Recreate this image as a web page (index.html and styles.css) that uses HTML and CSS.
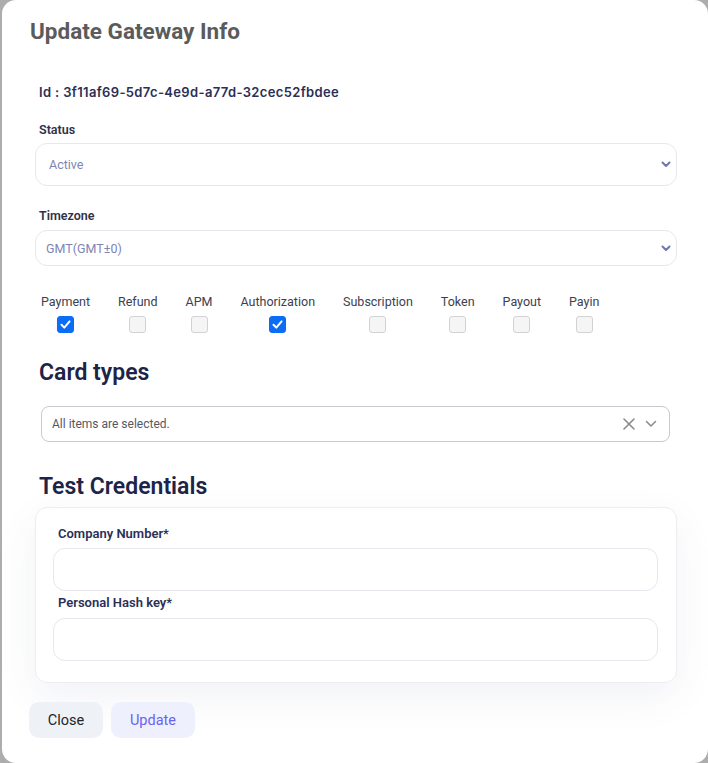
FILE: index.html
```html
<!DOCTYPE html>
<html lang="en">
<head>
<meta charset="utf-8">
<title>Update Gateway Info</title>
<link rel="stylesheet" href="styles.css">
</head>
<body>
<div class="modal">
  <h1 class="title">Update Gateway Info</h1>
  <div class="content">
    <div class="id-line">Id : 3f11af69-5d7c-4e9d-a77d-32cec52fbdee</div>

    <label class="field-label status-label">Status</label>
    <div class="select select-lg">
      <span class="select-value">Active</span>
      <svg class="chev" width="10" height="7" viewBox="0 0 10 7"><path d="M1.5 1.5 L5 5 L8.5 1.5" fill="none" stroke="#6e77ad" stroke-width="2" stroke-linecap="round" stroke-linejoin="round"/></svg>
    </div>

    <label class="field-label tz-label">Timezone</label>
    <div class="select select-sm">
      <span class="select-value tz">GMT(GMT±0)</span>
      <svg class="chev" width="10" height="7" viewBox="0 0 10 7"><path d="M1.5 1.5 L5 5 L8.5 1.5" fill="none" stroke="#6e77ad" stroke-width="2" stroke-linecap="round" stroke-linejoin="round"/></svg>
    </div>

    <div class="checks">
      <div class="check"><span class="check-label">Payment</span><span class="box checked"><svg width="17" height="17" viewBox="0 0 17 17"><path d="M4.5 8.8 L7.3 11.6 L12.6 5.4" fill="none" stroke="#fff" stroke-width="2" stroke-linecap="round" stroke-linejoin="round"/></svg></span></div>
      <div class="check"><span class="check-label">Refund</span><span class="box"></span></div>
      <div class="check"><span class="check-label">APM</span><span class="box"></span></div>
      <div class="check"><span class="check-label">Authorization</span><span class="box checked"><svg width="17" height="17" viewBox="0 0 17 17"><path d="M4.5 8.8 L7.3 11.6 L12.6 5.4" fill="none" stroke="#fff" stroke-width="2" stroke-linecap="round" stroke-linejoin="round"/></svg></span></div>
      <div class="check"><span class="check-label">Subscription</span><span class="box"></span></div>
      <div class="check"><span class="check-label">Token</span><span class="box"></span></div>
      <div class="check"><span class="check-label">Payout</span><span class="box"></span></div>
      <div class="check"><span class="check-label">Payin</span><span class="box"></span></div>
    </div>

    <h2 class="section-title card-types">Card types</h2>
    <div class="multi">
      <span class="multi-value">All items are selected.</span>
      <span class="multi-icons">
        <svg width="14" height="14" viewBox="0 0 14 14"><path d="M2 2 L12 12 M12 2 L2 12" fill="none" stroke="#8a8a8a" stroke-width="1.6" stroke-linecap="round"/></svg>
        <svg width="12" height="8" viewBox="0 0 12 8"><path d="M1.5 1.5 L6 6 L10.5 1.5" fill="none" stroke="#8a8a8a" stroke-width="1.5" stroke-linecap="round" stroke-linejoin="round"/></svg>
      </span>
    </div>

    <h2 class="section-title test-creds">Test Credentials</h2>
    <div class="card">
      <label class="input-label">Company Number*</label>
      <div class="input"></div>
      <label class="input-label second">Personal Hash key*</label>
      <div class="input"></div>
    </div>
  </div>
  <div class="actions">
    <button class="btn btn-close">Close</button>
    <button class="btn btn-update">Update</button>
  </div>
</div>
</body>
</html>
```
FILE: styles.css
```css
* { box-sizing: border-box; }
html, body { margin: 0; padding: 0; }
body {
  background: #adadad;
  font-family: Roboto, "Liberation Sans", sans-serif;
  width: 708px;
  height: 763px;
  overflow: hidden;
}
.modal {
  margin-left: 2px;
  width: 706px;
  height: 763px;
  background: #ffffff;
  border-radius: 14px;
}
.title {
  margin: 0;
  padding: 17px 0 0 28px;
  font-size: 22.5px;
  line-height: 28px;
  font-weight: 700;
  color: #5b5b5b;
}
.content {
  padding: 0 31px 0 33px;
}
.id-line {
  margin-top: 38px;
  padding-left: 4px;
  font-family: Inter, Roboto, sans-serif;
  font-size: 13px;
  letter-spacing: 0.35px;
  line-height: 18px;
  font-weight: 600;
  color: #2b2f56;
}
.field-label {
  display: block;
  padding-left: 4px;
  font-size: 12.5px;
  line-height: 16px;
  font-weight: 600;
  color: #2f3146;
}
.status-label { margin-top: 21px; }
.tz-label { margin-top: 22px; }
.select {
  display: flex;
  align-items: center;
  justify-content: space-between;
  border: 1px solid #e6e8ee;
  border-radius: 12px;
  padding: 0 5px 0 13px;
}
.select-lg { height: 43px; margin-top: 5px; }
.select-sm { height: 36px; margin-top: 6px; padding-left: 10px; }
.select-value {
  font-size: 12.5px;
  color: #7e85b4;
}
.checks {
  display: flex;
  gap: 28px;
  margin-top: 28px;
  padding-left: 6px;
}
.check {
  display: flex;
  flex-direction: column;
  align-items: center;
  gap: 6px;
}
.check-label {
  font-size: 12.5px;
  line-height: 16px;
  color: #3e4050;
}
.box {
  width: 17px;
  height: 17px;
  border: 1px solid #d2d2d2;
  background: #f5f5f5;
  border-radius: 3px;
  display: block;
}
.box.checked {
  background: #0b6df6;
  border-color: #0b6df6;
  position: relative;
}
.box.checked svg {
  position: absolute;
  left: -1px;
  top: -1px;
}
.section-title {
  margin: 0;
  padding-left: 4px;
  font-size: 23px;
  line-height: 28px;
  font-weight: 600;
  color: #1e2447;
}
.card-types { margin-top: 26px; }
.multi {
  margin: 19px 7px 0 6px;
  height: 36px;
  border: 1px solid #c8cacf;
  border-radius: 8px;
  display: flex;
  align-items: center;
  justify-content: space-between;
  padding: 0 12px 0 10px;
}
.multi-value {
  font-size: 12px;
  color: #555863;
}
.multi-icons {
  display: flex;
  align-items: center;
  gap: 9px;
}
.test-creds { margin-top: 31px; }
.card {
  margin-top: 6px;
  height: 176px;
  border: 1px solid #ececf1;
  border-radius: 12px;
  padding: 18px 18px 0 17px;
  box-shadow: 0 14px 40px rgba(60, 70, 110, 0.07);
}
.input-label {
  display: block;
  padding-left: 5px;
  font-size: 13px;
  line-height: 16px;
  font-weight: 600;
  color: #2b2f56;
}
.input-label.second { margin-top: 4px; }
.input {
  margin-top: 6px;
  height: 43px;
  border: 1px solid #e6e8ee;
  border-radius: 12px;
  background: #fff;
}
.input-label.second + .input { margin-top: 7px; }
.actions {
  display: flex;
  gap: 8px;
  margin-top: 19px;
  padding-left: 27px;
}
.btn {
  height: 36px;
  border: none;
  border-radius: 10px;
  font-family: Roboto, "Liberation Sans", sans-serif;
  font-size: 14.5px;
  padding: 0;
}
.btn-close {
  width: 74px;
  background: #eef2f6;
  color: #23252d;
}
.btn-update {
  width: 84px;
  background: #eef0fe;
  color: #6a63ee;
}
```
